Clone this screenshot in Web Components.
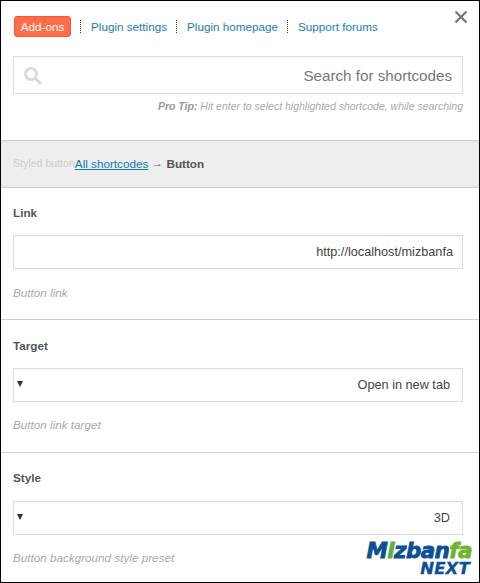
<!DOCTYPE html>
<html><head><meta charset="utf-8">
<style>
html,body{margin:0;padding:0;background:#fff;}
body{font-family:"Liberation Sans",Arial,sans-serif;width:480px;height:583px;overflow:hidden;}
</style></head>
<body>
<template id="t-app"><style>
:host{display:block;position:relative;box-sizing:border-box;width:480px;height:583px;border:1px solid #000;overflow:hidden;background:#fff;font:13px "Liberation Sans",Arial,sans-serif;color:#444}
.x{position:absolute;top:8px;right:10px;width:16px;height:16px;display:block}
.bar{display:flex;align-items:center;height:21px;margin:15px 0 0 13px}
.logo{position:absolute;right:7px;bottom:6px;width:106px;text-align:right;font-style:italic;font-weight:700;font-family:"DejaVu Sans",sans-serif;line-height:1}
.logo .a{display:block;font-size:21.5px;line-height:21px;height:21px;letter-spacing:-.6px;color:#0d4f94;-webkit-text-stroke:.8px currentColor;white-space:nowrap}
.logo .a b{color:#6fb52e;font-weight:700}
.logo .a u{text-decoration:none;color:#5fb03a}
.logo .n{display:block;font-size:16.5px;line-height:14px;height:14px;letter-spacing:.2px;color:#0d4f94;margin-top:1px;padding-right:2px;-webkit-text-stroke:.3px currentColor}
</style>
<svg class="x" viewBox="0 0 16 16"><path d="M2.5 2.5 13.5 13.5M13.5 2.5 2.5 13.5" stroke="#777" stroke-width="2.3" fill="none"/></svg>
<div class="bar"><su-addon>Add-ons</su-addon><su-link first>Plugin settings</su-link><su-link>Plugin homepage</su-link><su-link>Support forums</su-link></div>
<su-search></su-search>
<su-crumb></su-crumb>
<su-field style="height:132px;--top:18px;--gap:17px" label="Link" hint="Button link" value="http://localhost/mizbanfa"></su-field>
<su-field label="Target" hint="Button link target" value="Open in new tab" select></su-field>
<su-field style="--top:18px;--lg:16px" label="Style" hint="Button background style preset" value="3D" select last></su-field>
<div class="logo"><span class="a">M<u>i</u>zban<b>fa</b></span><span class="n">NEXT</span></div>
</template>

<template id="t-addon"><style>
:host{display:block;box-sizing:border-box;width:57px;height:21px;line-height:19px;text-align:center;background:#ff6d4a;border:1px solid #f9572f;border-radius:3px;color:#fff;font-size:11.7px}
</style><slot></slot></template>

<template id="t-link"><style>
:host{display:flex;align-items:center;font-size:11.7px;color:#1f80ad;white-space:nowrap;margin-left:9px}
i{display:block;width:0;height:13px;border-left:1px dotted #333;margin-right:10px}
</style><i></i><slot></slot></template>

<template id="t-search"><style>
:host{display:block;margin:19px 16px 0 12px}
.box{position:relative;box-sizing:border-box;height:38px;border:1px solid #ddd;box-shadow:inset 0 1px 2px rgba(0,0,0,.04);display:flex;align-items:center;justify-content:flex-end;padding-right:10px;font-size:15.2px;color:#777;background:#fff}
svg{position:absolute;left:9px;top:9px;width:19px;height:19px}
.tip{margin-top:6px;text-align:right;font-size:10.5px;font-style:italic;color:#aaa;line-height:12px;white-space:nowrap}
b{color:#999}
</style><div class="box"><svg viewBox="0 0 19 19"><circle cx="8" cy="8" r="5.6" fill="none" stroke="#d8d8d8" stroke-width="2.6"/><path d="M12.2 12.2 17 17" stroke="#d8d8d8" stroke-width="3" stroke-linecap="round"/></svg>Search for shortcodes</div>
<div class="tip"><b>Pro Tip:</b> Hit enter to select highlighted shortcode, while searching</div></template>

<template id="t-crumb"><style>
:host{display:flex;align-items:center;box-sizing:border-box;height:48px;margin-top:28px;padding-left:12px;background:#eee;border-top:1px solid #ccc;border-bottom:1px solid #ccc;font-size:11.7px;color:#666;white-space:nowrap}
.s{color:#ccc;font-size:10.6px;position:relative;top:-1px}
a{color:#0e7cae;text-decoration:underline;position:relative;top:-1px}
b{color:#555;position:relative;top:-1px}
.r{position:relative;top:-2px}
</style><span class="s">Styled button</span><a>All shortcodes</a>&nbsp;<span class="r">→</span>&nbsp;<b>Button</b></template>

<template id="t-field"><style>
:host{display:block;box-sizing:border-box;height:133px;padding:var(--top,19px) 16px 0 12px;border-bottom:1px solid #ccc}
:host([last]){border-bottom:0}
.l{font-size:11.7px;font-weight:700;color:#555;line-height:14px}
.v{position:relative;box-sizing:border-box;height:34px;margin-top:var(--lg,15px);border:1px solid #ddd;box-shadow:inset 0 1px 2px rgba(0,0,0,.04);display:flex;align-items:center;justify-content:flex-end;padding-right:9px;font-size:12.7px;color:#444}
:host([select]) .v{padding-right:12px}
.h{margin-top:var(--gap,16px);font-size:11.7px;font-style:italic;color:#aaa;line-height:14px}
.t{display:none;position:absolute;left:3px;top:12px;width:0;height:0;border:3px solid transparent;border-top:6px solid #333;border-bottom:0}
:host([select]) .t{display:block}
</style><div class="l"></div><div class="v"><span class="t"></span><span class="val"></span></div><div class="h"></div></template>

<script>
function def(name,tpl,init){customElements.define(name,class extends HTMLElement{constructor(){super();this.attachShadow({mode:'open'}).appendChild(document.getElementById(tpl).content.cloneNode(true));}connectedCallback(){init&&init(this)}})}
def('su-addon','t-addon');
def('su-link','t-link');
def('su-search','t-search');
def('su-crumb','t-crumb');
def('su-field','t-field',e=>{const s=e.shadowRoot;s.querySelector('.l').textContent=e.getAttribute('label');s.querySelector('.h').textContent=e.getAttribute('hint');s.querySelector('.val').textContent=e.getAttribute('value')});
def('su-app','t-app');
</script>
<su-app></su-app>
</body></html>
